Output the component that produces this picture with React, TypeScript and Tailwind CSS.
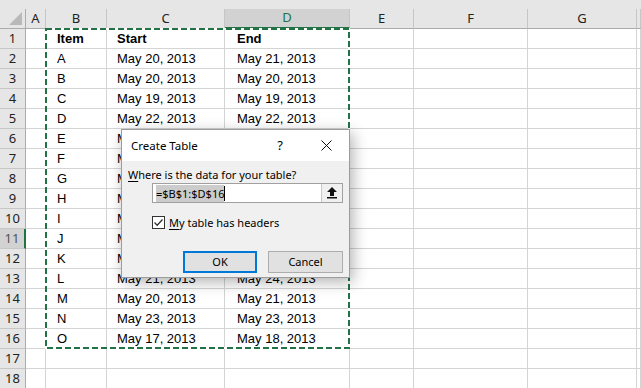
import React from "react";

const rows: string[][] = [
  ["Item", "Start", "End"],
  ["A", "May 20, 2013", "May 21, 2013"],
  ["B", "May 20, 2013", "May 20, 2013"],
  ["C", "May 19, 2013", "May 19, 2013"],
  ["D", "May 22, 2013", "May 22, 2013"],
  ["E", "May 18, 2013", "May 20, 2013"],
  ["F", "May 21, 2013", "May 22, 2013"],
  ["G", "May 19, 2013", "May 21, 2013"],
  ["H", "May 22, 2013", "May 23, 2013"],
  ["I", "May 20, 2013", "May 22, 2013"],
  ["J", "May 17, 2013", "May 19, 2013"],
  ["K", "May 23, 2013", "May 24, 2013"],
  ["L", "May 21, 2013", "May 24, 2013"],
  ["M", "May 20, 2013", "May 21, 2013"],
  ["N", "May 23, 2013", "May 23, 2013"],
  ["O", "May 17, 2013", "May 18, 2013"],
  [],
  [],
];

const cols = ["A", "B", "C", "D", "E", "F", "G", ""];

const uiFont = { fontFamily: '"Noto Sans", "Liberation Sans", sans-serif' };
const cellFont = { fontFamily: '"Liberation Sans", Arial, sans-serif' };

function ColHeader({ label }: { label: string }) {
  const sel = label === "D";
  return (
    <div
      className={
        sel
          ? "h-[20px] flex items-center justify-center bg-[#d2d2d2] border-r border-[#c6c6c6] border-b-2 border-b-[#217346] text-[13px] text-[#217346]"
          : "h-[20px] flex items-center justify-center bg-[#e6e6e6] border-r border-[#c6c6c6] border-b border-b-[#ababab] text-[13px] text-[#222]"
      }
      style={uiFont}
    >
      {label}
    </div>
  );
}

function RowHeader({ n }: { n: number }) {
  const sel = n === 11;
  return (
    <div
      className={
        sel
          ? "h-[20px] flex items-center justify-center bg-[#d2d2d2] border-b border-[#c6c6c6] border-r-2 border-r-[#217346] text-[13px] text-[#555]"
          : "h-[20px] flex items-center justify-center bg-[#e6e6e6] border-b border-[#c6c6c6] border-r border-r-[#ababab] text-[13px] text-[#222]"
      }
      style={uiFont}
    >
      {n}
    </div>
  );
}

function Cell({ text, bold, pad }: { text?: string; bold?: boolean; pad?: string }) {
  return (
    <div
      className={
        "h-[20px] flex items-center border-r border-b border-[#d4d4d4] text-[13px] text-black whitespace-nowrap overflow-hidden " +
        (bold ? "font-bold " : "") +
        (pad ?? "")
      }
      style={cellFont}
    >
      {text}
    </div>
  );
}

export default function App() {
  return (
    <div className="relative w-[641px] h-[388px] overflow-hidden bg-white">
      <div className="h-[9px] bg-[#e6e6e6]" />
      <div className="grid grid-cols-[26px_20px_61px_118px_125px_64px_114px_109px_1fr]">
        {/* corner */}
        <div className="h-[20px] bg-[#e6e6e6] border-r border-[#ababab] border-b border-b-[#ababab] flex items-end justify-end pr-[3px] pb-[3px]">
          <svg width="13" height="13" viewBox="0 0 13 13">
            <polygon points="13,0 13,13 0,13" fill="#b9b9b9" />
          </svg>
        </div>
        {cols.map((c, i) => (
          <ColHeader key={i} label={c} />
        ))}
        {rows.map((r, i) => (
          <React.Fragment key={i}>
            <RowHeader n={i + 1} />
            <Cell />
            <Cell text={r[0]} bold={i === 0} pad="pl-[11px]" />
            <Cell text={r[1]} bold={i === 0} pad="pl-[10px]" />
            <Cell text={r[2]} bold={i === 0} pad="pl-[12px]" />
            <Cell />
            <Cell />
            <Cell />
            <Cell />
          </React.Fragment>
        ))}
      </div>

      {/* copy marquee */}
      <svg className="absolute left-0 top-0 pointer-events-none" width="641" height="388">
        <rect x="46" y="29" width="303" height="319" fill="none" stroke="#ffffff" strokeWidth="2" />
        <rect x="46" y="29" width="303" height="319" fill="none" stroke="#217346" strokeWidth="2" strokeDasharray="6 3" />
      </svg>

      {/* dialog */}
      <div
        className="absolute left-[121px] top-[129px] w-[229px] h-[149px] border border-[#9c9c9c] bg-[#f0f0f0] shadow-[3px_4px_14px_rgba(0,0,0,0.3)] flex flex-col text-[11px] text-black"
        style={uiFont}
      >
        <div className="h-[31px] bg-white flex items-center">
          <span className="pl-[9px] text-[11.5px]">Create Table</span>
          <div className="ml-auto flex h-full">
            <div className="w-[46px] flex items-center justify-center text-[13px]">?</div>
            <div className="w-[46px] flex items-center justify-center">
              <svg width="11" height="11" viewBox="0 0 11 11">
                <path d="M0.5 0.5 L10.5 10.5 M10.5 0.5 L0.5 10.5" stroke="#111" strokeWidth="1" />
              </svg>
            </div>
          </div>
        </div>
        <div className="flex flex-col px-[6px]">
          <div className="mt-[6px] h-[16px] leading-[16px]">
            <span className="underline underline-offset-2">W</span>here is the data for your table?
          </div>
          <div className="ml-[24px] w-[191px] h-[20px] flex border border-[#a0a0a0] bg-white">
            <div className="flex-1 flex items-center pl-[3px]">
              <span className="bg-[#cccccc] leading-[17px] h-[17px] flex items-center text-[11px]">=$B$1:$D$16</span>
              <span className="w-px h-[15px] bg-black" />
            </div>
            <div className="w-[21px] h-full flex items-center justify-center bg-[#f0f0f0] border-l border-[#c8c8c8]">
              <svg width="10" height="12" viewBox="0 0 10 12">
                <path d="M5 0 L10 5 H7 V9 H3 V5 H0 Z" fill="#111" />
                <rect x="0" y="10" width="10" height="1.5" fill="#111" />
              </svg>
            </div>
          </div>
          <div className="ml-[24px] mt-[13px] flex items-center h-[13px]">
            <div className="w-[13px] h-[13px] border border-[#333] bg-white flex items-center justify-center">
              <svg width="11" height="11" viewBox="0 0 11 11">
                <path d="M1.5 5.5 L4.2 8.2 L9.5 2.5" fill="none" stroke="#333" strokeWidth="1.3" />
              </svg>
            </div>
            <span className="ml-[4px] leading-[16px]">
              <span className="underline underline-offset-2">M</span>y table has headers
            </span>
          </div>
          <div className="mt-[22px] flex justify-end gap-[11px]">
            <div className="w-[74px] h-[22px] border-2 border-[#0078d7] bg-[#e1e1e1] flex items-center justify-center">
              OK
            </div>
            <div className="w-[75px] h-[22px] border border-[#adadad] bg-[#e1e1e1] flex items-center justify-center">
              Cancel
            </div>
          </div>
        </div>
      </div>
    </div>
  );
}
